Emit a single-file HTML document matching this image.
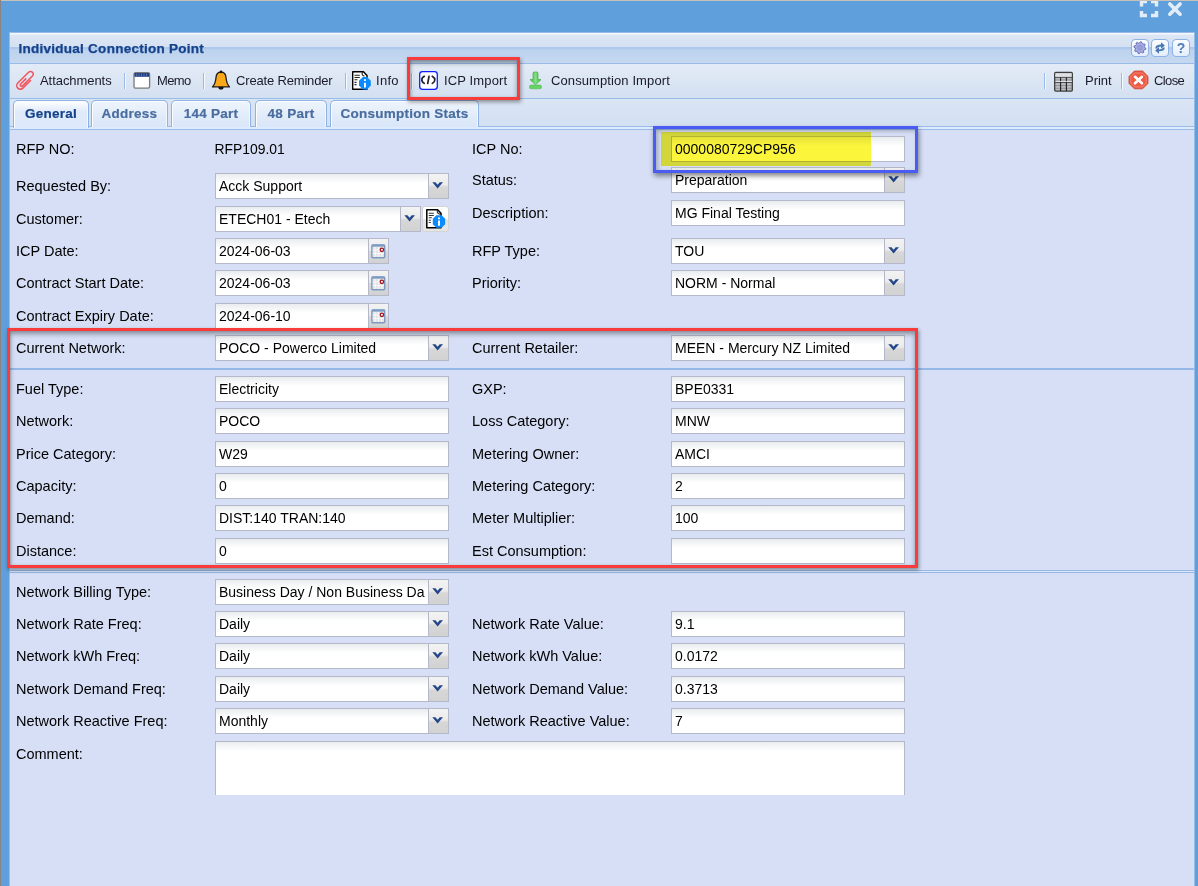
<!DOCTYPE html><html><head><meta charset="utf-8"><style>
*{margin:0;padding:0;box-sizing:border-box}
html,body{width:1198px;height:886px;overflow:hidden}
body{position:relative;background:#5fa0dc;font-family:"Liberation Sans",sans-serif;color:#000}
.abs{position:absolute}
#gtop{left:0;top:0;width:1198px;height:1px;background:#c6c1ba}
#gleft{left:0;top:0;width:1px;height:886px;background:#898582}
#panel{left:9px;top:32px;width:1186px;height:854px;background:#d6dff6;border-left:1px solid #99bbe8;border-right:1px solid #99bbe8;border-top:1px solid #99bbe8}
#hdr{left:10px;top:33px;width:1184px;height:30px;background:linear-gradient(#f4f8fc 0,#f4f8fc 1px,#dce6f4 2px,#d5e1f2 13.5px,#adc8ea 14.5px,#afc9eb 15.5px,#bcd2ee 17px,#c7d9f0 30px)}
#title{left:18.5px;top:41px;font-weight:bold;font-size:13.5px;letter-spacing:0.26px;-webkit-text-stroke:0.25px #15428b;color:#15428b;line-height:16px;white-space:nowrap}
.tool{width:18px;height:18px;border:1px solid #8db2e3;border-radius:4px;background:linear-gradient(#fafcff,#e4eefb)}
#tb{left:10px;top:63px;width:1184px;height:36px;border-top:1px solid #99bbe8;border-bottom:1px solid #99bbe8;background:linear-gradient(#e3ebf6,#d3e0f1)}
.tbt{font-size:13px;color:#1a1a2a;line-height:1;white-space:nowrap}
.sep{width:1px;height:16px;background:#99bbe8;top:73px;box-shadow:1px 0 0 #f4f8ff}
#tabstrip{left:10px;top:99px;width:1184px;height:31px;background:linear-gradient(#dae5f4,#d2e0f3);border-bottom:1px solid #99bbe8}
#tabstripb{left:10px;top:127px;width:1184px;height:2px;background:#deebfc}
.tab{top:100px;height:27px;border:1px solid #8db2e3;border-bottom:none;border-radius:5px 5px 0 0;box-shadow:inset 1px 1px 0 #fbfdff, inset -1px 0 0 #f4f8fe;background:linear-gradient(#eef4fc,#d8e6f8);font-weight:bold;font-size:13.5px;letter-spacing:0.25px;-webkit-text-stroke:0.2px currentColor;color:#4a6d9f;text-align:center;line-height:25px;white-space:nowrap}
.tab.act{background:linear-gradient(#ffffff,#dfeafa 40%,#deeafb);color:#15428b;height:28px}
.lbl{font-size:14.5px;line-height:16px;white-space:nowrap;color:#000}
.fld{border:1px solid #b5b8c8;background:linear-gradient(#e9ecee,#fff 9px);overflow:hidden}
.val{position:absolute;left:3px;top:4px;font-size:14px;line-height:16px;white-space:nowrap;color:#000}
.trig{position:absolute;right:0;top:0;bottom:0;width:20px;border-left:1px solid #b5b8c8;background:linear-gradient(#f3f3f3,#ebebeb 45%,#d7d7d7 55%,#d2d2d2)}
.hsep{left:10px;width:1184px;height:2px;background:#95b8e7}
.redbox{border:3px solid #f83c3c;box-shadow:1px 2px 4px rgba(0,0,0,0.4), inset 0 3px 5px rgba(0,0,0,0.36), inset 1px 0 2px rgba(0,0,0,0.12)}
</style></head><body>
<svg class="abs" style="left:1138px;top:0px" width="22" height="20" viewBox="0 0 22 20">
<g fill="none" stroke="#e2edf9" stroke-width="3.4" stroke-linecap="butt">
<path d="M3.5 6.5 V1.5 H9"/><path d="M13 1.5 H18.5 V6.5"/><path d="M3.5 11 V15.5 H9"/><path d="M13 15.5 H18.5 V11"/></g></svg>
<svg class="abs" style="left:1166px;top:0px" width="18" height="18" viewBox="0 0 18 18">
<g stroke="#e2edf9" stroke-width="3.6" stroke-linecap="round"><path d="M3.8 3.9 L14.1 14.2"/><path d="M14.1 3.9 L3.8 14.2"/></g></svg>
<div class="abs" id="gtop"></div><div class="abs" id="gleft"></div>
<div class="abs" id="panel"></div>
<div class="abs" id="hdr"></div>
<div class="abs" id="title">Individual Connection Point</div>
<div class="abs tool" style="left:1131px;top:39px"></div>
<div class="abs tool" style="left:1151px;top:39px"></div>
<div class="abs tool" style="left:1172px;top:39px"></div>
<svg class="abs" style="left:1131px;top:39px" width="18" height="18" viewBox="0 0 18 18"><path d="M9.49 2.73 L10.64 2.96 L11.07 4.64 L11.82 5.14 L13.54 4.89 L14.19 5.87 L13.30 7.36 L13.48 8.25 L14.87 9.29 L14.64 10.44 L12.96 10.87 L12.46 11.62 L12.71 13.34 L11.73 13.99 L10.24 13.10 L9.35 13.28 L8.31 14.67 L7.16 14.44 L6.73 12.76 L5.98 12.26 L4.26 12.51 L3.61 11.53 L4.50 10.04 L4.32 9.15 L2.93 8.11 L3.16 6.96 L4.84 6.53 L5.34 5.78 L5.09 4.06 L6.07 3.41 L7.56 4.30 L8.45 4.12Z" fill="#a7aee6" stroke="#6a6db5" stroke-width="1" stroke-linejoin="round"/><circle cx="8.9" cy="8.7" r="2.3" fill="#9aa2d8" stroke="#8089c8" stroke-width="0.8"/></svg>
<svg class="abs" style="left:1151px;top:39px" width="18" height="18" viewBox="0 0 18 18"><g fill="none" stroke="#4676b4" stroke-width="1.9"><path d="M5.2 9.5 Q5.2 6.5 10.5 6.5"/><path d="M12.8 8.5 Q12.8 11.4 7.5 11.4"/></g><path d="M10 3.2 L13.8 6.5 L10 9.8Z M8 8.1 L4.2 11.4 L8 14.7Z" fill="#4676b4"/></svg>
<div class="abs" style="left:1172px;top:39px;width:18px;text-align:center;font-weight:bold;font-size:14px;color:#4f7db9;line-height:18px">?</div>
<div class="abs" id="tb"></div>
<div class="abs sep" style="left:124px"></div>
<div class="abs sep" style="left:203px"></div>
<div class="abs sep" style="left:345px"></div>
<div class="abs sep" style="left:411px"></div>
<div class="abs sep" style="left:1044px"></div>
<div class="abs sep" style="left:1121px"></div>
<div class="abs tbt" style="left:40px;top:74.4px;font-size:13px;letter-spacing:-0.06px">Attachments</div>
<div class="abs tbt" style="left:157px;top:74.4px;font-size:13px;letter-spacing:-0.60px">Memo</div>
<div class="abs tbt" style="left:236px;top:74.4px;font-size:13px;letter-spacing:-0.17px">Create Reminder</div>
<div class="abs tbt" style="left:376px;top:74.4px;font-size:13px;letter-spacing:0.27px">Info</div>
<div class="abs tbt" style="left:444px;top:74.4px;font-size:13px;letter-spacing:0.13px">ICP Import</div>
<div class="abs tbt" style="left:551px;top:74.4px;font-size:13px;letter-spacing:0.10px">Consumption Import</div>
<div class="abs tbt" style="left:1085px;top:74.4px;font-size:13px;letter-spacing:-0.03px">Print</div>
<div class="abs tbt" style="left:1154px;top:74.4px;font-size:13px;letter-spacing:-0.60px">Close</div>
<svg class="abs" style="left:12px;top:66px" width="28" height="28" viewBox="0 0 28 28"><g transform="translate(13.6,14.3) rotate(45) scale(0.9) translate(-4,-12.25)"><path d="M3 11 V19 A1.5 1.5 0 0 0 6 19 V3.5 A3 3 0 0 0 0 3.5 V20.5 A4 4 0 0 0 8 20.5 V8.5" fill="none" stroke="#f2535d" stroke-width="1.7" stroke-linecap="round"/></g></svg>
<svg class="abs" style="left:128px;top:66px" width="28" height="28" viewBox="0 0 28 28"><rect x="6" y="6.6" width="15.6" height="15.6" rx="1.6" fill="#fff" stroke="#7a7a7a" stroke-width="1.3"/><rect x="6.4" y="7" width="14.8" height="3.8" fill="#213f83"/><g stroke="#6f84b8" stroke-width="0.7"><path d="M8.5 7.5 V10.3 M11 7.5 V10.3 M13.5 7.5 V10.3 M16 7.5 V10.3 M18.5 7.5 V10.3"/></g></svg>
<svg class="abs" style="left:207px;top:66px" width="28" height="28" viewBox="0 0 28 28"><path d="M14 6.2 C10.5 6.2 9.2 8.8 9 11.5 C8.7 15.5 8.2 18 5.5 20.9 H22.5 C19.8 18 19.3 15.5 19 11.5 C18.8 8.8 17.5 6.2 14 6.2Z" fill="#f9a81a" stroke="#1c1c1c" stroke-width="1.3" stroke-linejoin="round"/><circle cx="14" cy="5.9" r="1.3" fill="#111"/><path d="M11.4 21 A2.6 2.6 0 0 0 16.6 21Z" fill="#111"/></svg>
<svg class="abs" style="left:347px;top:66px" width="28" height="28" viewBox="0 0 28 28"><path d="M5.7 5.7 H16.5 L20 9.5 V23.2 H5.7Z" fill="#fff" stroke="#000" stroke-width="1.4" stroke-linejoin="round"/><path d="M15.5 6 C14.5 8 15.5 10 17.5 10" fill="none" stroke="#222" stroke-width="1.1"/><g stroke="#222" stroke-width="1.1"><path d="M7.5 9.2 H12.8 M7.5 11.5 H12.8 M7.5 13.7 H10.5 M7.5 16.4 H9.5 M7.5 18.6 H9.5"/></g><path d="M15.9 11 H20 L23.8 14.8 V19.6 L20 23.5 H15.9 L12 19.6 V14.8Z" fill="#0a8cff"/><g fill="#fff"><path d="M17 13.3 L18.9 13.3 L18.9 15 L17 15Z"/><path d="M17 16.7 H18.9 V21.5 H17Z"/></g></svg>
<svg class="abs" style="left:414px;top:66px" width="28" height="28" viewBox="0 0 28 28"><rect x="5.7" y="5.7" width="17.6" height="17.6" rx="2.8" fill="#fff" stroke="#0c20ff" stroke-width="1.3"/><path d="M10.3 10.3 Q7.6 12 7.9 13.8 Q7.6 15.7 10.3 17.4 M18.3 10.3 Q21 12 20.8 13.8 Q21 15.7 18.3 17.4 M15 10.3 L13.7 17.5" fill="none" stroke="#222" stroke-width="1.7" stroke-linecap="round"/></svg>
<svg class="abs" style="left:521px;top:66px" width="28" height="28" viewBox="0 0 28 28"><defs><linearGradient id="gg" x1="0" x2="1"><stop offset="0" stop-color="#45b845"/><stop offset="0.5" stop-color="#7fe07f"/><stop offset="1" stop-color="#45b845"/></linearGradient></defs><path d="M12 7.2 Q12 6 13.2 6 H15.8 Q17 6 17 7.2 V13.6 H20 L14.5 18.8 L9 13.6 H12Z" fill="url(#gg)" stroke="#3a9e3a" stroke-width="0.6"/><rect x="8.5" y="19" width="12" height="3.8" rx="1.6" fill="#66d366" stroke="#44b044" stroke-width="0.5"/></svg>
<svg class="abs" style="left:1049px;top:67px" width="28" height="28" viewBox="0 0 28 28"><defs><linearGradient id="gr" x1="0" y1="0" x2="0" y2="1"><stop offset="0" stop-color="#d7dbe0"/><stop offset="1" stop-color="#a9adb3"/></linearGradient></defs><rect x="5.7" y="5.5" width="17.6" height="18.6" rx="1" fill="#b8bcc2" stroke="#3c3c3c" stroke-width="1.3"/><rect x="6.4" y="6.2" width="16.2" height="4" fill="#dde1e6"/><g stroke="#444" stroke-width="0.9"><path d="M6 10.4 H23 M6 15.5 H23"/></g><g stroke="#777" stroke-width="0.6"><path d="M6 13 H23 M6 18.5 H23 M6 21.3 H23"/></g><g stroke="#1e1e1e" stroke-width="1.1"><path d="M11.6 10.4 V24 M17.4 10.4 V24"/></g><g stroke="#f2f4f6" stroke-width="0.8"><path d="M6.5 14.4 H23"/></g></svg>
<svg class="abs" style="left:1124px;top:66px" width="28" height="28" viewBox="0 0 28 28"><path d="M10.4 5 H18.6 L24 10.4 V17.4 L18.6 22.8 H10.4 L5 17.4 V10.4Z" fill="#ef5a44" stroke="#c8402c" stroke-width="0.8"/><path d="M10.7 7 H18.3 L22.2 10.9 V17 L18.3 20.9 H10.7 L6.8 17 V10.9Z" fill="none" stroke="#f48a78" stroke-width="0.8"/><path d="M11 10.8 L17.9 17.3 M17.9 10.8 L11 17.3" stroke="#fff" stroke-width="2.6" stroke-linecap="round"/></svg>
<div class="abs" id="tabstrip"></div><div class="abs" id="tabstripb"></div><div class="abs" style="left:10px;top:126px;width:1184px;height:1px;background:#99bbe8"></div>
<div class="abs tab act" style="left:13px;width:76px">General</div>
<div class="abs tab" style="left:91px;width:77px">Address</div>
<div class="abs tab" style="left:171px;width:80px">144 Part</div>
<div class="abs tab" style="left:255px;width:72px">48 Part</div>
<div class="abs tab" style="left:330px;width:149px">Consumption Stats</div>
<div class="abs lbl" style="left:16px;top:141px">RFP NO:</div>
<div class="abs lbl" style="left:214.5px;top:141px;font-size:13.9px">RFP109.01</div>
<div class="abs lbl" style="left:16px;top:178px">Requested By:</div>
<div class="abs fld" style="left:215px;top:173px;width:234px;height:26px"><div class="val" style="top:4.0px">Acck Support</div><div class="trig"><svg style="position:absolute;left:0;top:0" width="19" height="24" viewBox="0 0 19 24"><polygon points="3.30,8.20 6.45,8.20 8.60,10.80 10.70,8.20 14.00,8.20 8.60,14.60" fill="#24478a"/></svg></div></div>
<div class="abs lbl" style="left:16px;top:211px">Customer:</div>
<div class="abs fld" style="left:215px;top:206px;width:206px;height:26px"><div class="val" style="top:4.0px">ETECH01 - Etech</div><div class="trig"><svg style="position:absolute;left:0;top:0" width="19" height="24" viewBox="0 0 19 24"><polygon points="3.30,8.20 6.45,8.20 8.60,10.80 10.70,8.20 14.00,8.20 8.60,14.60" fill="#24478a"/></svg></div></div>
<div class="abs lbl" style="left:16px;top:243px">ICP Date:</div>
<div class="abs fld" style="left:215px;top:238px;width:174px;height:26px"><div class="val" style="top:4.0px">2024-06-03</div><div class="trig"><svg style="position:absolute;left:0;top:0" width="19" height="24" viewBox="0 0 19 24"><g transform="translate(0,0.00)"><rect x="2.9" y="5.9" width="12.8" height="12.8" rx="1" fill="#e4e4e4" stroke="#7b9ac6" stroke-width="1.4"/><rect x="2.9" y="5.6" width="12.8" height="2" fill="#7b9ac6"/><g stroke="#fafafa" stroke-width="0.9"><path d="M6.2 8 V18 M9.4 8 V18 M12.6 8 V18 M3.6 11 H15 M3.6 14.4 H15"/></g><circle cx="12.9" cy="10.8" r="1.7" fill="#fff" stroke="#a0141e" stroke-width="1.3"/></g></svg></div></div>
<div class="abs lbl" style="left:16px;top:275px">Contract Start Date:</div>
<div class="abs fld" style="left:215px;top:270px;width:174px;height:26px"><div class="val" style="top:4.0px">2024-06-03</div><div class="trig"><svg style="position:absolute;left:0;top:0" width="19" height="24" viewBox="0 0 19 24"><g transform="translate(0,0.00)"><rect x="2.9" y="5.9" width="12.8" height="12.8" rx="1" fill="#e4e4e4" stroke="#7b9ac6" stroke-width="1.4"/><rect x="2.9" y="5.6" width="12.8" height="2" fill="#7b9ac6"/><g stroke="#fafafa" stroke-width="0.9"><path d="M6.2 8 V18 M9.4 8 V18 M12.6 8 V18 M3.6 11 H15 M3.6 14.4 H15"/></g><circle cx="12.9" cy="10.8" r="1.7" fill="#fff" stroke="#a0141e" stroke-width="1.3"/></g></svg></div></div>
<div class="abs lbl" style="left:16px;top:308px">Contract Expiry Date:</div>
<div class="abs fld" style="left:215px;top:303px;width:174px;height:26px"><div class="val" style="top:4.0px">2024-06-10</div><div class="trig"><svg style="position:absolute;left:0;top:0" width="19" height="24" viewBox="0 0 19 24"><g transform="translate(0,0.00)"><rect x="2.9" y="5.9" width="12.8" height="12.8" rx="1" fill="#e4e4e4" stroke="#7b9ac6" stroke-width="1.4"/><rect x="2.9" y="5.6" width="12.8" height="2" fill="#7b9ac6"/><g stroke="#fafafa" stroke-width="0.9"><path d="M6.2 8 V18 M9.4 8 V18 M12.6 8 V18 M3.6 11 H15 M3.6 14.4 H15"/></g><circle cx="12.9" cy="10.8" r="1.7" fill="#fff" stroke="#a0141e" stroke-width="1.3"/></g></svg></div></div>
<div class="abs lbl" style="left:16px;top:340px">Current Network:</div>
<div class="abs fld" style="left:215px;top:335px;width:234px;height:26px"><div class="val" style="top:4.0px">POCO - Powerco Limited</div><div class="trig"><svg style="position:absolute;left:0;top:0" width="19" height="24" viewBox="0 0 19 24"><polygon points="3.30,8.20 6.45,8.20 8.60,10.80 10.70,8.20 14.00,8.20 8.60,14.60" fill="#24478a"/></svg></div></div>
<div class="abs lbl" style="left:16px;top:381px">Fuel Type:</div>
<div class="abs fld" style="left:215px;top:376px;width:234px;height:26px"><div class="val" style="top:4.0px">Electricity</div></div>
<div class="abs lbl" style="left:16px;top:413px">Network:</div>
<div class="abs fld" style="left:215px;top:408px;width:234px;height:26px"><div class="val" style="top:4.0px">POCO</div></div>
<div class="abs lbl" style="left:16px;top:446px">Price Category:</div>
<div class="abs fld" style="left:215px;top:441px;width:234px;height:26px"><div class="val" style="top:4.0px">W29</div></div>
<div class="abs lbl" style="left:16px;top:478px">Capacity:</div>
<div class="abs fld" style="left:215px;top:473px;width:234px;height:26px"><div class="val" style="top:4.0px">0</div></div>
<div class="abs lbl" style="left:16px;top:510px">Demand:</div>
<div class="abs fld" style="left:215px;top:505px;width:234px;height:26px"><div class="val" style="top:4.0px">DIST:140 TRAN:140</div></div>
<div class="abs lbl" style="left:16px;top:543px">Distance:</div>
<div class="abs fld" style="left:215px;top:538px;width:234px;height:26px"><div class="val" style="top:4.0px">0</div></div>
<div class="abs lbl" style="left:16px;top:584px">Network Billing Type:</div>
<div class="abs fld" style="left:215px;top:579px;width:234px;height:26px"><div class="val" style="top:4.0px">Business Day / Non Business Da</div><div class="trig"><svg style="position:absolute;left:0;top:0" width="19" height="24" viewBox="0 0 19 24"><polygon points="3.30,8.20 6.45,8.20 8.60,10.80 10.70,8.20 14.00,8.20 8.60,14.60" fill="#24478a"/></svg></div></div>
<div class="abs lbl" style="left:16px;top:616px">Network Rate Freq:</div>
<div class="abs fld" style="left:215px;top:611px;width:234px;height:26px"><div class="val" style="top:4.0px">Daily</div><div class="trig"><svg style="position:absolute;left:0;top:0" width="19" height="24" viewBox="0 0 19 24"><polygon points="3.30,8.20 6.45,8.20 8.60,10.80 10.70,8.20 14.00,8.20 8.60,14.60" fill="#24478a"/></svg></div></div>
<div class="abs lbl" style="left:16px;top:648px">Network kWh Freq:</div>
<div class="abs fld" style="left:215px;top:643px;width:234px;height:26px"><div class="val" style="top:4.0px">Daily</div><div class="trig"><svg style="position:absolute;left:0;top:0" width="19" height="24" viewBox="0 0 19 24"><polygon points="3.30,8.20 6.45,8.20 8.60,10.80 10.70,8.20 14.00,8.20 8.60,14.60" fill="#24478a"/></svg></div></div>
<div class="abs lbl" style="left:16px;top:681px">Network Demand Freq:</div>
<div class="abs fld" style="left:215px;top:676px;width:234px;height:26px"><div class="val" style="top:4.0px">Daily</div><div class="trig"><svg style="position:absolute;left:0;top:0" width="19" height="24" viewBox="0 0 19 24"><polygon points="3.30,8.20 6.45,8.20 8.60,10.80 10.70,8.20 14.00,8.20 8.60,14.60" fill="#24478a"/></svg></div></div>
<div class="abs lbl" style="left:16px;top:713px">Network Reactive Freq:</div>
<div class="abs fld" style="left:215px;top:708px;width:234px;height:26px"><div class="val" style="top:4.0px">Monthly</div><div class="trig"><svg style="position:absolute;left:0;top:0" width="19" height="24" viewBox="0 0 19 24"><polygon points="3.30,8.20 6.45,8.20 8.60,10.80 10.70,8.20 14.00,8.20 8.60,14.60" fill="#24478a"/></svg></div></div>
<div class="abs" style="left:422px;top:206px;width:27px;height:26px;border:1px solid #d4d4d4;border-radius:3px;background:linear-gradient(#fff 0,#fff 50%,#e6e6e6 50%,#e6e6e6)"></div>
<svg class="abs" style="left:422px;top:205px" width="28" height="28" viewBox="0 0 28 28"><path d="M4.8 4.7 H15.6 L19 8.2 V22.8 H4.8Z" fill="#fff" stroke="#000" stroke-width="1.5" stroke-linejoin="round"/><path d="M15.4 5 C14.8 7.5 16 9.3 19.5 9.4" fill="none" stroke="#222" stroke-width="1.1"/><g stroke="#333" stroke-width="1.1"><path d="M6.8 8.3 H11.8 M6.8 10.5 H11.8 M6.8 12.8 H9.8 M6.8 15.3 H8.8 M6.8 17.5 H8.8"/></g><path d="M14.4 10.2 H19.6 L23.2 13.8 V19.2 L19.6 22.8 H14.4 L10.8 19.2 V13.8Z" fill="#0a8cff"/><g fill="#fff"><path d="M16 12.4 L18 12.4 L18 14.3 L16 14.3Z"/><path d="M16 15.6 H18 V20.8 H16Z"/></g></svg>
<div class="abs lbl" style="left:16px;top:746px">Comment:</div>
<div class="abs" style="left:215px;top:741px;width:690px;height:54px;border:1px solid #b5b8c8;border-bottom:none;background:linear-gradient(#e9ecee,#fff 9px)"></div>
<div class="abs lbl" style="left:472px;top:141px">ICP No:</div>
<div class="abs fld" style="left:671px;top:136px;width:234px;height:26px"><div class="val" style="top:4.0px">0000080729CP956</div></div>
<div class="abs lbl" style="left:472px;top:172px">Status:</div>
<div class="abs fld" style="left:671px;top:167px;width:234px;height:26px"><div class="val" style="top:4.0px">Preparation</div><div class="trig"><svg style="position:absolute;left:0;top:0" width="19" height="24" viewBox="0 0 19 24"><polygon points="3.30,8.20 6.45,8.20 8.60,10.80 10.70,8.20 14.00,8.20 8.60,14.60" fill="#24478a"/></svg></div></div>
<div class="abs lbl" style="left:472px;top:205px">Description:</div>
<div class="abs fld" style="left:671px;top:200px;width:234px;height:26px"><div class="val" style="top:4.0px">MG Final Testing</div></div>
<div class="abs lbl" style="left:472px;top:243px">RFP Type:</div>
<div class="abs fld" style="left:671px;top:238px;width:234px;height:26px"><div class="val" style="top:4.0px">TOU</div><div class="trig"><svg style="position:absolute;left:0;top:0" width="19" height="24" viewBox="0 0 19 24"><polygon points="3.30,8.20 6.45,8.20 8.60,10.80 10.70,8.20 14.00,8.20 8.60,14.60" fill="#24478a"/></svg></div></div>
<div class="abs lbl" style="left:472px;top:275px">Priority:</div>
<div class="abs fld" style="left:671px;top:270px;width:234px;height:26px"><div class="val" style="top:4.0px">NORM - Normal</div><div class="trig"><svg style="position:absolute;left:0;top:0" width="19" height="24" viewBox="0 0 19 24"><polygon points="3.30,8.20 6.45,8.20 8.60,10.80 10.70,8.20 14.00,8.20 8.60,14.60" fill="#24478a"/></svg></div></div>
<div class="abs lbl" style="left:472px;top:340px">Current Retailer:</div>
<div class="abs fld" style="left:671px;top:335px;width:234px;height:26px"><div class="val" style="top:4.0px">MEEN - Mercury NZ Limited</div><div class="trig"><svg style="position:absolute;left:0;top:0" width="19" height="24" viewBox="0 0 19 24"><polygon points="3.30,8.20 6.45,8.20 8.60,10.80 10.70,8.20 14.00,8.20 8.60,14.60" fill="#24478a"/></svg></div></div>
<div class="abs lbl" style="left:472px;top:381px">GXP:</div>
<div class="abs fld" style="left:671px;top:376px;width:234px;height:26px"><div class="val" style="top:4.0px">BPE0331</div></div>
<div class="abs lbl" style="left:472px;top:413px">Loss Category:</div>
<div class="abs fld" style="left:671px;top:408px;width:234px;height:26px"><div class="val" style="top:4.0px">MNW</div></div>
<div class="abs lbl" style="left:472px;top:446px">Metering Owner:</div>
<div class="abs fld" style="left:671px;top:441px;width:234px;height:26px"><div class="val" style="top:4.0px">AMCI</div></div>
<div class="abs lbl" style="left:472px;top:478px">Metering Category:</div>
<div class="abs fld" style="left:671px;top:473px;width:234px;height:26px"><div class="val" style="top:4.0px">2</div></div>
<div class="abs lbl" style="left:472px;top:510px">Meter Multiplier:</div>
<div class="abs fld" style="left:671px;top:505px;width:234px;height:26px"><div class="val" style="top:4.0px">100</div></div>
<div class="abs lbl" style="left:472px;top:543px">Est Consumption:</div>
<div class="abs fld" style="left:671px;top:538px;width:234px;height:26px"></div>
<div class="abs lbl" style="left:472px;top:616px">Network Rate Value:</div>
<div class="abs fld" style="left:671px;top:611px;width:234px;height:26px"><div class="val" style="top:4.0px">9.1</div></div>
<div class="abs lbl" style="left:472px;top:648px">Network kWh Value:</div>
<div class="abs fld" style="left:671px;top:643px;width:234px;height:26px"><div class="val" style="top:4.0px">0.0172</div></div>
<div class="abs lbl" style="left:472px;top:681px">Network Demand Value:</div>
<div class="abs fld" style="left:671px;top:676px;width:234px;height:26px"><div class="val" style="top:4.0px">0.3713</div></div>
<div class="abs lbl" style="left:472px;top:713px">Network Reactive Value:</div>
<div class="abs fld" style="left:671px;top:708px;width:234px;height:26px"><div class="val" style="top:4.0px">7</div></div>
<div class="abs hsep" style="top:368px"></div>
<div class="abs" style="left:10px;top:570px;width:1184px;height:3px;border-top:1px solid #95b8e7;border-bottom:1px solid #95b8e7;background:#dfe7fa"></div>
<div class="abs" style="left:661px;top:132px;width:210px;height:34px;background:#fbf53c;mix-blend-mode:multiply"></div>
<div class="abs" style="left:653px;top:126px;width:265px;height:47px;border:3px solid #4a5cf2;box-shadow:1px 3px 5px rgba(0,0,0,0.45), inset 2px 2px 4px rgba(0,0,0,0.25)"></div>
<div class="abs redbox" style="left:407px;top:57px;width:113px;height:43px"></div>
<div class="abs redbox" style="left:7px;top:328px;width:911px;height:240px"></div>
</body></html>
